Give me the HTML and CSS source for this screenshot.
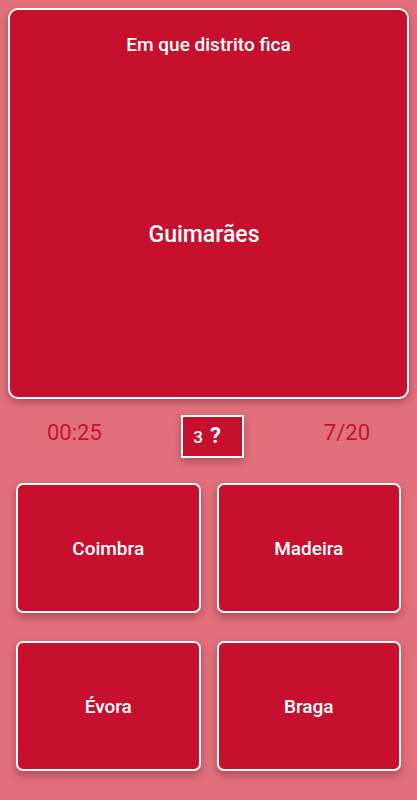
FILE: index.html
```html
<!DOCTYPE html>
<html lang="pt">
<head>
<meta charset="utf-8">
<title>Quiz</title>
<link rel="stylesheet" href="styles.css">
</head>
<body>
<div class="screen">
  <section class="question-card">
    <div class="question-title">Em que distrito fica</div>
    <div class="question-subject">Guimarães</div>
  </section>
  <div class="stats">
    <span class="stat">00:25</span>
    <div class="hint-box"><span class="hint-count">3</span><span class="hint-mark">?</span></div>
    <span class="stat">7/20</span>
  </div>
  <div class="answers">
    <button class="answer">Coimbra</button>
    <button class="answer">Madeira</button>
    <button class="answer">Évora</button>
    <button class="answer">Braga</button>
  </div>
</div>
</body>
</html>
```
FILE: styles.css
```css
html, body {
  margin: 0;
  padding: 0;
  background: #e1707b;
  font-family: Roboto, "Liberation Sans", sans-serif;
}
.screen {
  width: 417px;
  height: 800px;
  overflow: hidden;
  padding-top: 8px;
  box-sizing: border-box;
}
.question-card {
  margin: 0 8px;
  height: 391px;
  box-sizing: border-box;
  background: #c6102e;
  border: 2px solid #ffffff;
  border-radius: 10px;
  box-shadow: 0 3px 7px rgba(90, 0, 20, 0.35);
  display: flex;
  flex-direction: column;
  align-items: center;
  color: #ffffff;
  padding-top: 24px;
}
.question-title {
  font-size: 19px;
  font-weight: 500;
  line-height: 22px;
}
.question-subject {
  margin-top: 165px;
  font-size: 23px;
  font-weight: 500;
  line-height: 27px;
  padding-right: 9px;
}
.stats {
  margin-top: 16px;
  padding: 0 47px;
  display: flex;
  justify-content: space-between;
  align-items: center;
}
.stat {
  color: #c8102e;
  font-size: 22px;
  line-height: 26px;
  margin-bottom: 7px;
}
.hint-box {
  width: 63px;
  height: 43px;
  box-sizing: border-box;
  background: #c6102e;
  border: 2px solid #ffffff;
  box-shadow: 0 4px 8px rgba(90, 0, 20, 0.3);
  display: flex;
  align-items: baseline;
  padding: 6px 0 0 10px;
  color: #ffffff;
  line-height: 26px;
}
.hint-count {
  font-size: 17px;
  font-weight: 500;
}
.hint-mark {
  font-size: 22px;
  font-weight: 700;
  margin-left: 7px;
}
.answers {
  margin-top: 25px;
  padding: 0 16px;
  display: grid;
  grid-template-columns: 1fr 1fr;
  grid-auto-rows: 130px;
  column-gap: 16px;
  row-gap: 28px;
}
.answer {
  margin: 0;
  background: #c6102e;
  border: 2px solid #ffffff;
  border-radius: 7px;
  box-shadow: 0 4px 8px rgba(90, 0, 20, 0.35);
  color: #ffffff;
  font-family: Roboto, "Liberation Sans", sans-serif;
  font-size: 19px;
  font-weight: 500;
  padding: 0;
}
```
